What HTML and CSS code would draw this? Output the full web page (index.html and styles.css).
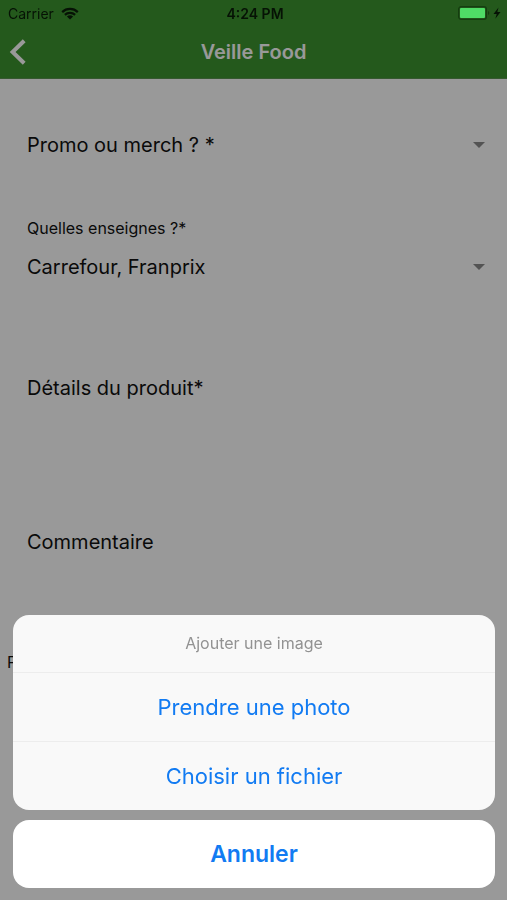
FILE: index.html
```html
<!DOCTYPE html>
<html lang="fr">
<head>
<meta charset="utf-8">
<meta name="viewport" content="width=device-width, initial-scale=1">
<title>Veille Food</title>
<link rel="stylesheet" href="styles.css">
</head>
<body>
<header class="header">
  <div class="status">
    <div class="status-left">
      <span>Carrier</span>
      <svg class="wifi" viewBox="0 0 18 13" aria-hidden="true">
        <path d="M1.2 5.1a11.2 11.2 0 0 1 15.6 0M3.9 7.9a7.3 7.3 0 0 1 10.2 0" fill="none" stroke="currentColor" stroke-width="2.2"/>
        <path d="M9 12.6 5.9 9.6a4.5 4.5 0 0 1 6.2 0z" fill="currentColor"/>
      </svg>
    </div>
    <span class="time">4:24 PM</span>
    <div class="status-right">
      <svg class="battery" viewBox="0 0 44 14" aria-hidden="true">
        <rect x=".6" y=".6" width="27.8" height="12.8" rx="2.6" fill="none" stroke="#153d10" stroke-width="1.2"/>
        <rect x="2" y="2" width="25" height="10" rx="1" fill="#4fdc66"/>
        <path d="M30 5a2.2 2.2 0 0 1 0 4z" fill="#153d10"/>
        <path d="M40.5 1.5 35.5 8h3.2l-1.4 4.8L42.5 6h-3.2z" fill="#061205"/>
      </svg>
    </div>
  </div>
  <nav class="nav">
    <button class="back" type="button" aria-label="Retour">
      <svg viewBox="0 0 17 26" aria-hidden="true"><path d="M15.2 1.7 3.6 13l11.6 11.3" fill="none" stroke="currentColor" stroke-width="4"/></svg>
    </button>
    <h1 class="title">Veille Food</h1>
  </nav>
</header>

<form class="form">
  <div class="field select-field promo">
    <select class="control" aria-label="Promo ou merch">
      <option>Promo ou merch ? *</option>
    </select>
  </div>
  <div class="field enseignes">
    <label class="label" for="enseignes">Quelles enseignes ?*</label>
    <div class="select-field">
      <select class="control" id="enseignes">
        <option>Carrefour, Franprix</option>
      </select>
    </div>
  </div>
  <div class="field">
    <textarea class="control area" aria-label="Détails du produit" placeholder="Détails du produit*"></textarea>
  </div>
  <div class="field">
    <textarea class="control area short" aria-label="Commentaire" placeholder="Commentaire"></textarea>
  </div>
  <p class="section">P</p>
</form>

<div class="backdrop"></div>
<div class="sheet" role="dialog" aria-labelledby="sheet-title">
  <div class="group">
    <h2 class="sheet-title" id="sheet-title">Ajouter une image</h2>
    <button class="action" type="button">Prendre une photo</button>
    <button class="action" type="button">Choisir un fichier</button>
  </div>
  <button class="action cancel" type="button">Annuler</button>
</div>
</body>
</html>
```
FILE: styles.css
```css
* {
  box-sizing: border-box;
}

body {
  margin: 0;
  background: #fff;
  color: #111;
  font-family: Inter, "Liberation Sans", sans-serif;
}

button,
select,
textarea {
  margin: 0;
  padding: 0;
  border: 0;
  background: none;
  color: inherit;
  font: inherit;
}

.header {
  background: #3d942f;
  border-bottom: 1px solid #5a9550;
}

.status {
  position: relative;
  z-index: 2;
  display: grid;
  grid-template-columns: 1fr auto 1fr;
  align-items: center;
  height: 26px;
  padding: 0 5px 0 8px;
  color: #061205;
  font-size: 14px;
}

.status-left {
  display: flex;
  align-items: center;
  gap: 7px;
}

.wifi {
  width: 18px;
  height: 13px;
}

.time {
  font-weight: 600;
}

.status-right {
  display: flex;
  justify-content: flex-end;
}

.battery {
  width: 44px;
  height: 14px;
}

.nav {
  display: grid;
  grid-template-columns: 1fr auto 1fr;
  align-items: center;
  height: 52px;
  padding: 0 9px;
  color: #fff;
}

.back {
  justify-self: start;
  display: flex;
}

.back svg {
  width: 17px;
  height: 26px;
}

.title {
  margin: 0;
  font-size: 20px;
  font-weight: 600;
}

.form {
  padding: 51px 20px 0 27px;
}

.control {
  display: block;
  width: 100%;
  height: 30px;
  font-size: 20px;
  line-height: 30px;
}

select.control {
  appearance: none;
}

.select-field {
  display: grid;
  grid-template-columns: 1fr auto;
  align-items: center;
}

.select-field::after {
  content: "";
  margin-right: 2px;
  border: 6px solid transparent;
  border-top-color: #8a8a8a;
  border-bottom: 0;
}

.promo {
  margin-bottom: 58px;
}

.label {
  display: block;
  height: 34px;
  font-size: 16px;
  line-height: 20px;
}

.enseignes {
  margin-bottom: 91px;
}

.area {
  height: 154px;
  resize: none;
}

.area::placeholder {
  color: inherit;
}

.short {
  height: 125px;
}

.section {
  margin: 0 0 0 -20px;
  font-size: 16px;
  line-height: 20px;
}

.backdrop {
  position: fixed;
  inset: 0;
  z-index: 1;
  background: rgba(0, 0, 0, 0.4);
}

.sheet {
  position: fixed;
  right: 12px;
  bottom: 12px;
  left: 13px;
  z-index: 3;
  display: grid;
  gap: 10px;
}

.group {
  overflow: hidden;
  border-radius: 16px;
  background: #f9f9f9;
}

.sheet-title {
  margin: 0;
  color: #929292;
  font-size: 16px;
  font-weight: 400;
  line-height: 57px;
  text-align: center;
}

.action {
  display: block;
  width: 100%;
  height: 68px;
  color: #127bf2;
  font-size: 22px;
}

.group .action {
  height: 69px;
  border-top: 1px solid #ededed;
}

.cancel {
  border-radius: 16px;
  background: #fff;
  font-size: 23px;
  font-weight: 600;
}
```
